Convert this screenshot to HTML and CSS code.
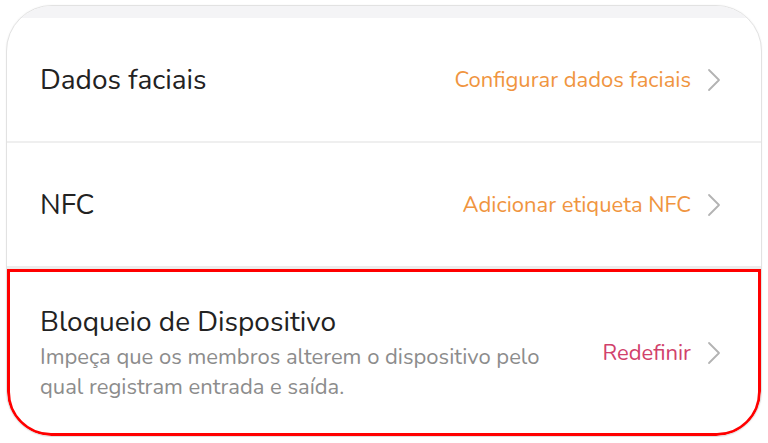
FILE: index.html
```html
<!DOCTYPE html>
<html lang="pt">
<head>
<meta charset="utf-8">
<link rel="stylesheet" href="styles.css">
</head>
<body>
<div class="card">
  <div class="top-strip"></div>
  <div class="row">
    <div class="title">Dados faciais</div>
    <div class="action">
      <span class="link orange">Configurar dados faciais</span>
      <svg class="chev" viewBox="0 0 14 24" width="14" height="24"><path d="M2 2 L12 12 L2 22" fill="none" stroke="#b3b3b3" stroke-width="1.8" stroke-linecap="round" stroke-linejoin="round"/></svg>
    </div>
  </div>
  <div class="divider"></div>
  <div class="row">
    <div class="title">NFC</div>
    <div class="action">
      <span class="link orange">Adicionar etiqueta NFC</span>
      <svg class="chev" viewBox="0 0 14 24" width="14" height="24"><path d="M2 2 L12 12 L2 22" fill="none" stroke="#b3b3b3" stroke-width="1.8" stroke-linecap="round" stroke-linejoin="round"/></svg>
    </div>
  </div>
  <div class="gap"></div>
  <div class="row highlight">
    <div class="texts">
      <div class="title">Bloqueio de Dispositivo</div>
      <div class="desc">Impeça que os membros alterem o dispositivo pelo qual registram entrada e saída.</div>
    </div>
    <div class="action">
      <span class="link pink">Redefinir</span>
      <svg class="chev" viewBox="0 0 14 24" width="14" height="24"><path d="M2 2 L12 12 L2 22" fill="none" stroke="#b3b3b3" stroke-width="1.8" stroke-linecap="round" stroke-linejoin="round"/></svg>
    </div>
  </div>
</div>
</body>
</html>
```

FILE: styles.css
```css
html, body {
  margin: 0;
  padding: 0;
  background: #ffffff;
}
body {
  font-family: "Nunito", "Lato", "Open Sans", sans-serif;
}
.card {
  margin: 5px 6px 0 6px;
  height: 430px;
  border: 1px solid #e2e2e2;
  border-radius: 46px;
  overflow: hidden;
  background: #ffffff;
  display: flex;
  flex-direction: column;
  box-shadow: 0 0 2px rgba(0,0,0,0.06);
}
.top-strip {
  height: 12px;
  background: #f4f4f6;
  flex: none;
}
.row {
  display: flex;
  align-items: center;
  justify-content: space-between;
  padding: 0 40px 0 33px;
  height: 123px;
  flex: none;
}
.divider {
  height: 2px;
  background: #efefef;
  flex: none;
}
.gap {
  height: 3px;
  background: #ececec;
  flex: none;
}
.title {
  font-size: 28px;
  color: #222222;
}
.action {
  display: flex;
  align-items: center;
  gap: 16px;
}
.link {
  font-size: 22px;
}
.orange { color: #f0953f; }
.pink { color: #d1416b; }
.chev { display: block; }
.highlight {
  flex: 1;
  height: auto;
  border: 3px solid #ff0000;
  border-radius: 0 0 44px 44px;
  padding: 0 37px 0 30px;
}
.texts {
  width: 545px;
}
.desc {
  margin-top: 1px;
  font-size: 22px;
  line-height: 30px;
  color: #8c8c8c;
}
```
